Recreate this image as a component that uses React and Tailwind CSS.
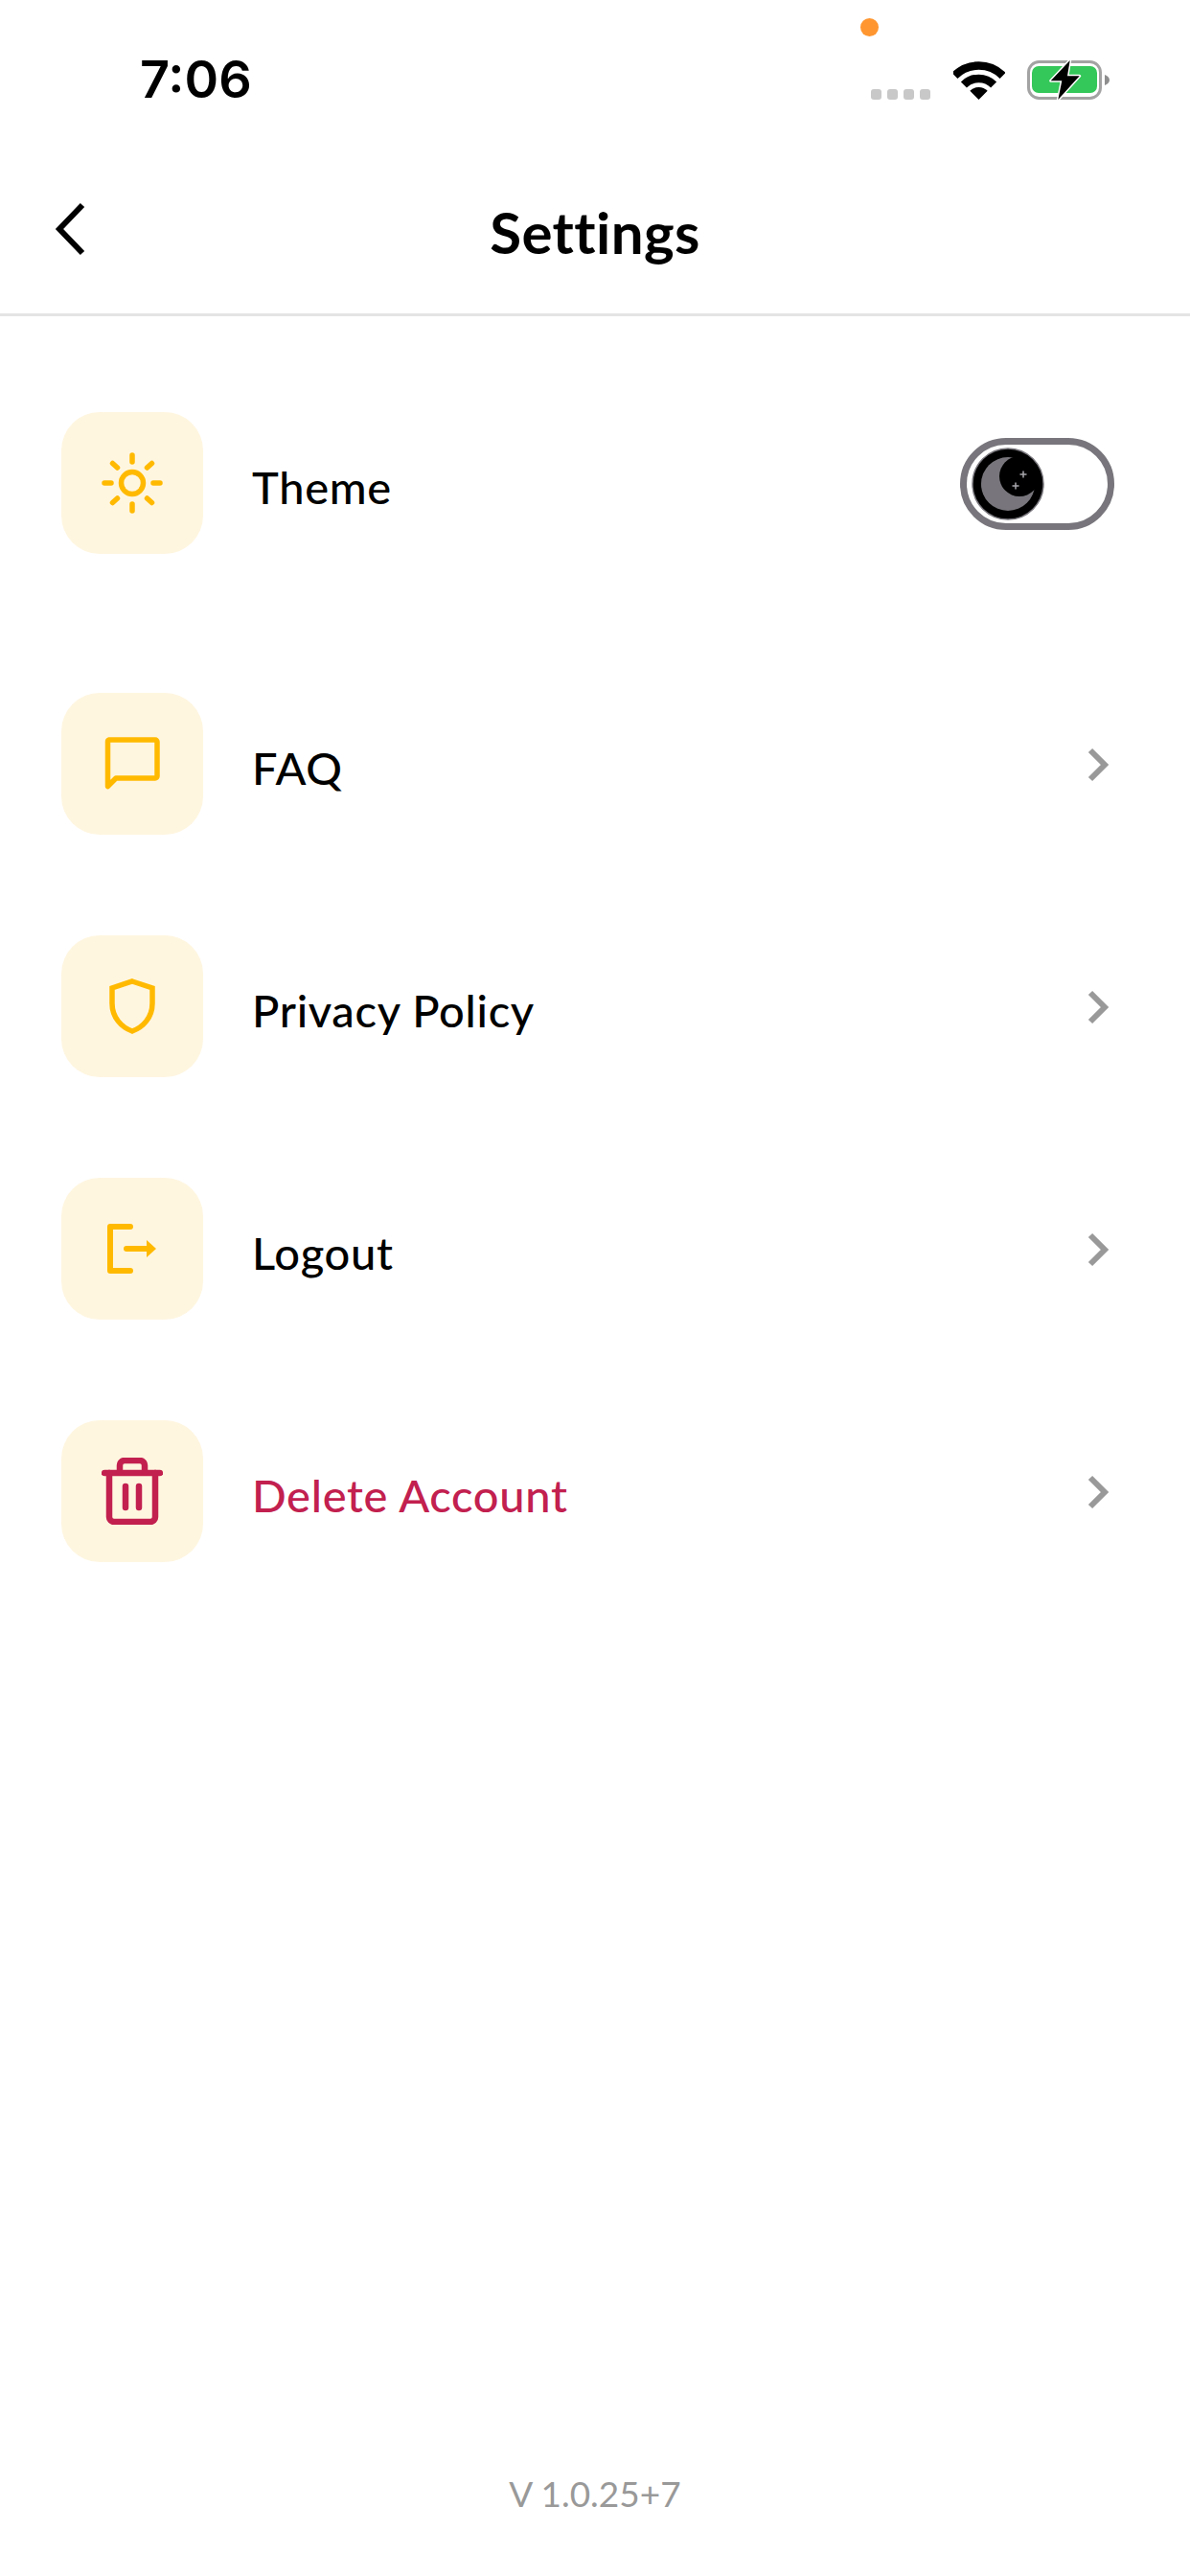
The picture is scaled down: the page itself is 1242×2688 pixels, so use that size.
import React from 'react';

const Tile = ({ children }) => (
  <div className="flex h-[148px] w-[148px] shrink-0 items-center justify-center rounded-[40px] bg-[#fff6e0]">{children}</div>
);

const Chevron = () => (
  <svg width="24" height="38" viewBox="0 0 24 38" fill="none" className="mt-[2px] shrink-0">
    <path d="M4 4 L19 19 L4 34" stroke="#999999" strokeWidth="6" />
  </svg>
);

const SunIcon = () => (
  <svg width="64" height="64" viewBox="0 0 64 64" fill="none" stroke="#ffba00" strokeWidth="5.5" strokeLinecap="round">
    <circle cx="32" cy="32" r="11.5" />
    <path d="M32 3v7M32 54v7M3 32h7M54 32h7M11.5 11.5l5 4.5M52.5 11.5l-5 4.5M11.5 52.5l5-4.5M52.5 52.5l-5-4.5" />
  </svg>
);

const ChatIcon = () => (
  <svg width="58" height="56" viewBox="0 0 58 56" fill="none" stroke="#ffba00" strokeWidth="5.5" strokeLinejoin="round">
    <path d="M3.5 51.5 V5 A2 2 0 0 1 5 3 H53 A2 2 0 0 1 55 5 V41 A2 2 0 0 1 53 43 H12 Z" />
  </svg>
);

const ShieldIcon = () => (
  <svg width="48" height="58" viewBox="0 0 48 58" fill="none" stroke="#ffba00" strokeWidth="5.5">
    <path d="M24 3 L45 10 V26 C45 41 35 51 24 55 C13 51 3 41 3 26 V10 Z" />
  </svg>
);

const LogoutIcon = () => (
  <svg width="52" height="52" viewBox="0 0 52 52" fill="none" stroke="#ffba00" strokeWidth="6" strokeLinecap="round" strokeLinejoin="round">
    <path d="M24 3 H3 V49 H24" />
    <path d="M20 26 H42" />
    <path d="M41 17 L51 26 L41 35 Z" fill="#ffba00" stroke="none" />
  </svg>
);

const TrashIcon = () => (
  <svg width="64" height="70" viewBox="0 0 64 70" fill="none" stroke="#c2204f" strokeWidth="6.5" strokeLinecap="round" strokeLinejoin="round">
    <path d="M3 16 H61" />
    <path d="M8 16 V62 A5 5 0 0 0 13 67 H51 A5 5 0 0 0 56 62 V16" />
    <path d="M19 15 V8 A5 5 0 0 1 24 3 H40 A5 5 0 0 1 45 8 V15" />
    <path d="M25 30 V52 M39 30 V52" />
  </svg>
);

const ThemeToggle = () => (
  <div className="mt-[1px] flex h-[96px] w-[161px] items-center rounded-full border-[7px] border-[#78767c] bg-white pl-[5px]">
    <svg width="76" height="76" viewBox="0 0 76 76">
      <circle cx="38" cy="38" r="37" fill="#000000" stroke="#78767c" strokeWidth="1.5" />
      <circle cx="38" cy="38" r="28" fill="#78767c" />
      <circle cx="50" cy="30" r="21" fill="#000000" />
      <path d="M54 24.5v7M50.5 28h7M46 36.5v7M42.5 40h7" stroke="#a8a6ac" strokeWidth="1.5" />
    </svg>
  </div>
);

const Row = ({ icon, label, danger, right, className }) => (
  <div className={`flex items-center ${className || ''}`}>
    <Tile>{icon}</Tile>
    <span className={`ml-[51px] flex-1 pt-[8px] text-[47px] font-medium leading-none tracking-[0.7px] ${danger ? 'text-[#c2204f]' : 'text-black'}`}>{label}</span>
    {right}
  </div>
);

const StatusIcons = () => (
  <div className="flex items-center">
    <div className="mt-[29px] flex gap-[6px]">
      {[0, 1, 2, 3].map((i) => (
        <div key={i} className="h-[11px] w-[11px] rounded-[3px] bg-[#c8c8c8]" />
      ))}
    </div>
    <svg width="54" height="40" viewBox="0 0 54 40" className="ml-[24px]">
      <g fill="none" stroke="#000000" strokeWidth="8.5">
        <path d="M1.4 14.9 A35.5 35.5 0 0 1 51.6 14.9" />
        <path d="M10.9 24.4 A22 22 0 0 1 42.1 24.4" />
      </g>
      <path d="M26.5 40 L17.3 30.8 A13 13 0 0 1 35.7 30.8 Z" fill="#000000" />
    </svg>
    <svg width="86" height="44" viewBox="0 0 86 44" className="ml-[23px]">
      <rect x="1.5" y="2.5" width="75" height="38" rx="11" fill="none" stroke="#a3a3a3" strokeWidth="3" />
      <rect x="5" y="7" width="68" height="28" rx="7" fill="#34c759" />
      <path d="M81 16 C84 17 86 19 86 21.5 C86 24 84 26 81 27 Z" fill="#8e8e8e" />
      <path d="M44.7 1 L24.7 22.3 H36.3 L32.3 42 L54.7 17.3 H42 Z" fill="#000000" stroke="#ffffff" strokeWidth="3" strokeLinejoin="round" paintOrder="stroke" />
    </svg>
  </div>
);

export default function App() {
  return (
    <div className="relative flex h-[2688px] w-[1242px] flex-col bg-white font-['Lato','Noto_Sans',sans-serif]">
      <div className="absolute left-[898px] top-[19px] h-[19px] w-[19px] rounded-full bg-[#ff9630]" />

      <div className="flex h-[120px] shrink-0 items-start justify-between pl-[146px] pr-[84px] pt-[62px]">
        <span className="font-['Inter',sans-serif] text-[54px] font-semibold leading-[42px] text-black">7:06</span>
        <StatusIcons />
      </div>

      <header className="relative flex h-[210px] shrink-0 items-center justify-center border-b-[3px] border-[#e4e4e4]">
        <button className="absolute left-[55px] top-[91px]" aria-label="Back">
          <svg width="34" height="56" viewBox="0 0 34 56" fill="none">
            <path d="M31 3 L7 28 L31 53" stroke="#000000" strokeWidth="6" />
          </svg>
        </button>
        <h1 className="pt-[36px] text-[60px] font-bold leading-none tracking-[0.4px] text-black">Settings</h1>
      </header>

      <main className="flex flex-col pl-[64px] pr-[84px] pt-[100px]">
        <Row icon={<SunIcon />} label="Theme" right={<div className="-mr-[5px]"><ThemeToggle /></div>} />
        <Row className="mt-[145px]" icon={<ChatIcon />} label="FAQ" right={<Chevron />} />
        <Row className="mt-[105px]" icon={<ShieldIcon />} label="Privacy Policy" right={<Chevron />} />
        <Row className="mt-[105px]" icon={<LogoutIcon />} label="Logout" right={<Chevron />} />
        <Row className="mt-[105px]" danger icon={<TrashIcon />} label="Delete Account" right={<Chevron />} />
      </main>

      <footer className="mt-auto pb-[68px] text-center text-[37px] leading-none text-[#999999]">V 1.0.25+7</footer>
    </div>
  );
}
